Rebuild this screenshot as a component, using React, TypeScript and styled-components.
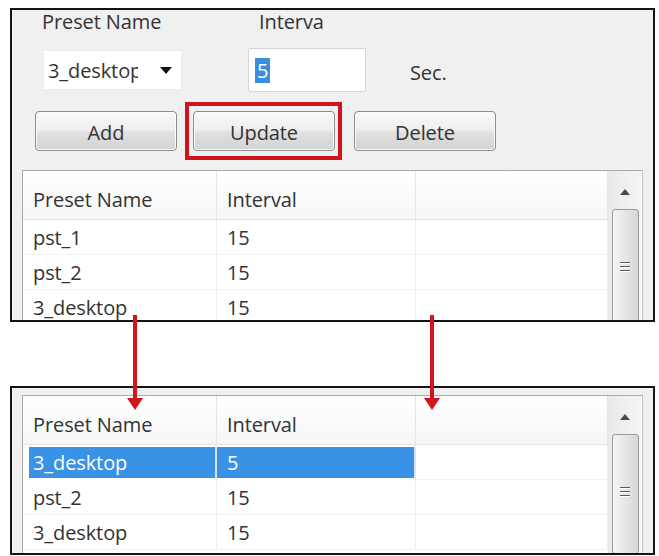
import React from 'react';
import styled, { createGlobalStyle, css } from 'styled-components';

const GlobalStyle = createGlobalStyle`
	body {
		margin: 0;
		background: #ffffff;
		font-family: 'Open Sans', 'Noto Sans', sans-serif;
		color: #333333;
	}
`;

type Row = { name: string; interval: string; selected?: boolean };

const beforeRows: Row[] = [
	{ name: 'pst_1', interval: '15' },
	{ name: 'pst_2', interval: '15' },
	{ name: '3_desktop', interval: '15' },
];

const afterRows: Row[] = [
	{ name: '3_desktop', interval: '5', selected: true },
	{ name: 'pst_2', interval: '15' },
	{ name: '3_desktop', interval: '15' },
];

const PresetList = ({ rows }: { rows: Row[] }) => (
	<ListBox>
		<ListMain>
			<HeaderRow>
				<HeaderCell $width={194}>Preset Name</HeaderCell>
				<HeaderCell $width={199}>Interval</HeaderCell>
				<HeaderCell $width={192} />
			</HeaderRow>
			{rows.map((row, i) => (
				<DataRow key={i}>
					<Cell $width={194} $selected={row.selected} $first>
						{row.name}
					</Cell>
					<Cell $width={199} $selected={row.selected}>
						{row.interval}
					</Cell>
					<Cell $width={192} />
				</DataRow>
			))}
		</ListMain>
		<ScrollBar>
			<UpArrow />
			<Thumb>
				<Grip>
					<span />
					<span />
					<span />
				</Grip>
			</Thumb>
		</ScrollBar>
	</ListBox>
);

const App = () => {
	return (
		<Page>
			<GlobalStyle />
			<TopPanel>
				<LabelRow>
					<Label $width={247} $indent={30}>
						Preset Name
					</Label>
					<Label>Interva</Label>
				</LabelRow>
				<FieldRow>
					<Dropdown>
						<DropText>3_desktop</DropText>
						<DropArrow />
					</Dropdown>
					<IntervalInput>
						<Highlight>5</Highlight>
					</IntervalInput>
					<Unit>Sec.</Unit>
				</FieldRow>
				<ButtonRow>
					<Button $offset={23}>Add</Button>
					<RedFrame>
						<Button>Update</Button>
					</RedFrame>
					<Button $offset={12}>Delete</Button>
				</ButtonRow>
				<PresetList rows={beforeRows} />
			</TopPanel>
			<BottomPanel>
				<PresetList rows={afterRows} />
			</BottomPanel>
			<Arrow $x={135} />
			<Arrow $x={432} />
		</Page>
	);
};

const Page = styled.div`
	position: relative;
	width: 659px;
	height: 556px;
	padding: 8px 0 0 10px;
	box-sizing: border-box;
	overflow: hidden;
`;

const Panel = styled.div`
	width: 645px;
	box-sizing: border-box;
	border: 2px solid #141414;
	background: #f0f0f0;
	overflow: hidden;
`;

const TopPanel = styled(Panel)`
	height: 314px;
`;

const BottomPanel = styled(Panel)`
	height: 169px;
	margin-top: 64px;
	padding-top: 0;
	& > div {
		margin-top: 7px;
	}
`;

const textFont = css`
	font-size: 20px;
	letter-spacing: -0.1px;
	white-space: nowrap;
`;

const LabelRow = styled.div`
	display: flex;
	height: 24px;
	line-height: 24px;
`;

const Label = styled.div<{ $width?: number; $indent?: number }>`
	${textFont}
	width: ${(p) => (p.$width ? `${p.$width}px` : 'auto')};
	padding-left: ${(p) => p.$indent ?? 0}px;
	box-sizing: border-box;
`;

const FieldRow = styled.div`
	display: flex;
	align-items: center;
	height: 44px;
	margin-top: 14px;
`;

const Dropdown = styled.div`
	display: flex;
	align-items: center;
	width: 139px;
	height: 40px;
	margin-left: 31px;
	background: #ffffff;
	border: 1px solid #ececec;
	box-sizing: border-box;
	padding: 0 9px 0 4px;
`;

const DropText = styled.span`
	${textFont}
	width: 90px;
	overflow: hidden;
`;

const DropArrow = styled.span`
	margin-left: auto;
	width: 0;
	height: 0;
	border-left: 6px solid transparent;
	border-right: 6px solid transparent;
	border-top: 7px solid #111111;
`;

const IntervalInput = styled.div`
	display: flex;
	align-items: center;
	width: 118px;
	height: 44px;
	margin-left: 66px;
	background: #ffffff;
	border: 1px solid #d6d6d6;
	border-radius: 2px;
	box-sizing: border-box;
	padding-left: 6px;
`;

const Highlight = styled.span`
	background: #3a8ee0;
	color: #ffffff;
	font-size: 20px;
	line-height: 25px;
	padding: 0 2px;
`;

const Unit = styled.span`
	${textFont}
	margin-left: 44px;
	margin-top: 4px;
`;

const ButtonRow = styled.div`
	display: flex;
	align-items: center;
	height: 58px;
	margin-top: 10px;
`;

const Button = styled.button<{ $offset?: number }>`
	width: 142px;
	height: 40px;
	margin-left: ${(p) => p.$offset ?? 0}px;
	border: 1px solid #8c8c8c;
	border-radius: 4px;
	background: linear-gradient(#f8f8f8 0%, #efefef 45%, #e0e0e0 55%, #d3d3d3 100%);
	box-shadow: inset 0 0 0 1px #fbfbfb;
	font-family: 'Open Sans', 'Noto Sans', sans-serif;
	${textFont}
	color: #333333;
	padding: 2px 0 0;
`;

const RedFrame = styled.div`
	display: flex;
	align-items: center;
	margin-left: 8px;
	padding: 4px 3px 4px 4px;
	border: 4px solid #d0141c;
	height: 58px;
	box-sizing: border-box;
`;

const ListBox = styled.div`
	display: flex;
	width: 619px;
	height: 200px;
	margin: 10px 0 0 10px;
	border: 1px solid #a9a9a9;
	border-right-color: #c4c4c4;
	background: #ffffff;
`;

const ListMain = styled.div`
	display: flex;
	flex-direction: column;
	width: 585px;
`;

const HeaderRow = styled.div`
	display: flex;
	height: 48px;
	background: linear-gradient(#ffffff, #f5f6f7);
	border-bottom: 1px solid #e2e3e5;
`;

const HeaderCell = styled.div<{ $width: number }>`
	width: ${(p) => p.$width}px;
	box-sizing: border-box;
	border-right: 1px solid #e4e5e7;
	padding: 10px 0 0 10px;
	line-height: 38px;
	${textFont}
`;

const DataRow = styled.div`
	display: flex;
	height: 35px;
`;

const Cell = styled.div<{ $width: number; $selected?: boolean; $first?: boolean }>`
	width: ${(p) => p.$width}px;
	box-sizing: border-box;
	border-right: 1px solid #eeeeee;
	border-bottom: 1px solid #f3f3f3;
	padding-left: 10px;
	line-height: 35px;
	${textFont}
	${(p) =>
		p.$selected &&
		css`
			background: #3a92e6;
			color: #ffffff;
			line-height: 31px;
			border-top: 2px solid #ffffff;
			border-bottom: 2px solid #ffffff;
			border-right: 2px solid #d4e6f7;
			padding-left: ${p.$first ? 4 : 10}px;
			${p.$first && 'border-left: 6px solid #ffffff;'}
		`}
`;

const ScrollBar = styled.div`
	display: flex;
	flex-direction: column;
	align-items: center;
	width: 32px;
	border-left: 1px solid #e8e8e8;
	background: linear-gradient(90deg, #eaeaea, #f4f4f4);
`;

const UpArrow = styled.span`
	margin-top: 18px;
	width: 0;
	height: 0;
	border-left: 5px solid transparent;
	border-right: 5px solid transparent;
	border-bottom: 6px solid #4a4a4a;
`;

const Thumb = styled.div`
	display: flex;
	justify-content: center;
	width: 27px;
	height: 120px;
	margin-top: 14px;
	box-sizing: border-box;
	border: 1px solid #9b9b9b;
	border-radius: 3px;
	background: linear-gradient(90deg, #f4f4f4, #e6e6e6 50%, #d6d6d6);
`;

const Grip = styled.div`
	display: flex;
	flex-direction: column;
	gap: 3px;
	margin-top: 52px;
	span {
		display: block;
		width: 10px;
		height: 1px;
		background: #5a5a5a;
		box-shadow: 0 1px 0 #ffffff;
	}
`;

const Arrow = styled.div<{ $x: number }>`
	position: absolute;
	left: ${(p) => p.$x - 2}px;
	top: 315px;
	width: 4px;
	height: 84px;
	background: #d3141d;
	&::after {
		content: '';
		position: absolute;
		left: -6px;
		bottom: -11px;
		width: 0;
		height: 0;
		border-left: 8px solid transparent;
		border-right: 8px solid transparent;
		border-top: 12px solid #d3141d;
	}
`;

export default App;
